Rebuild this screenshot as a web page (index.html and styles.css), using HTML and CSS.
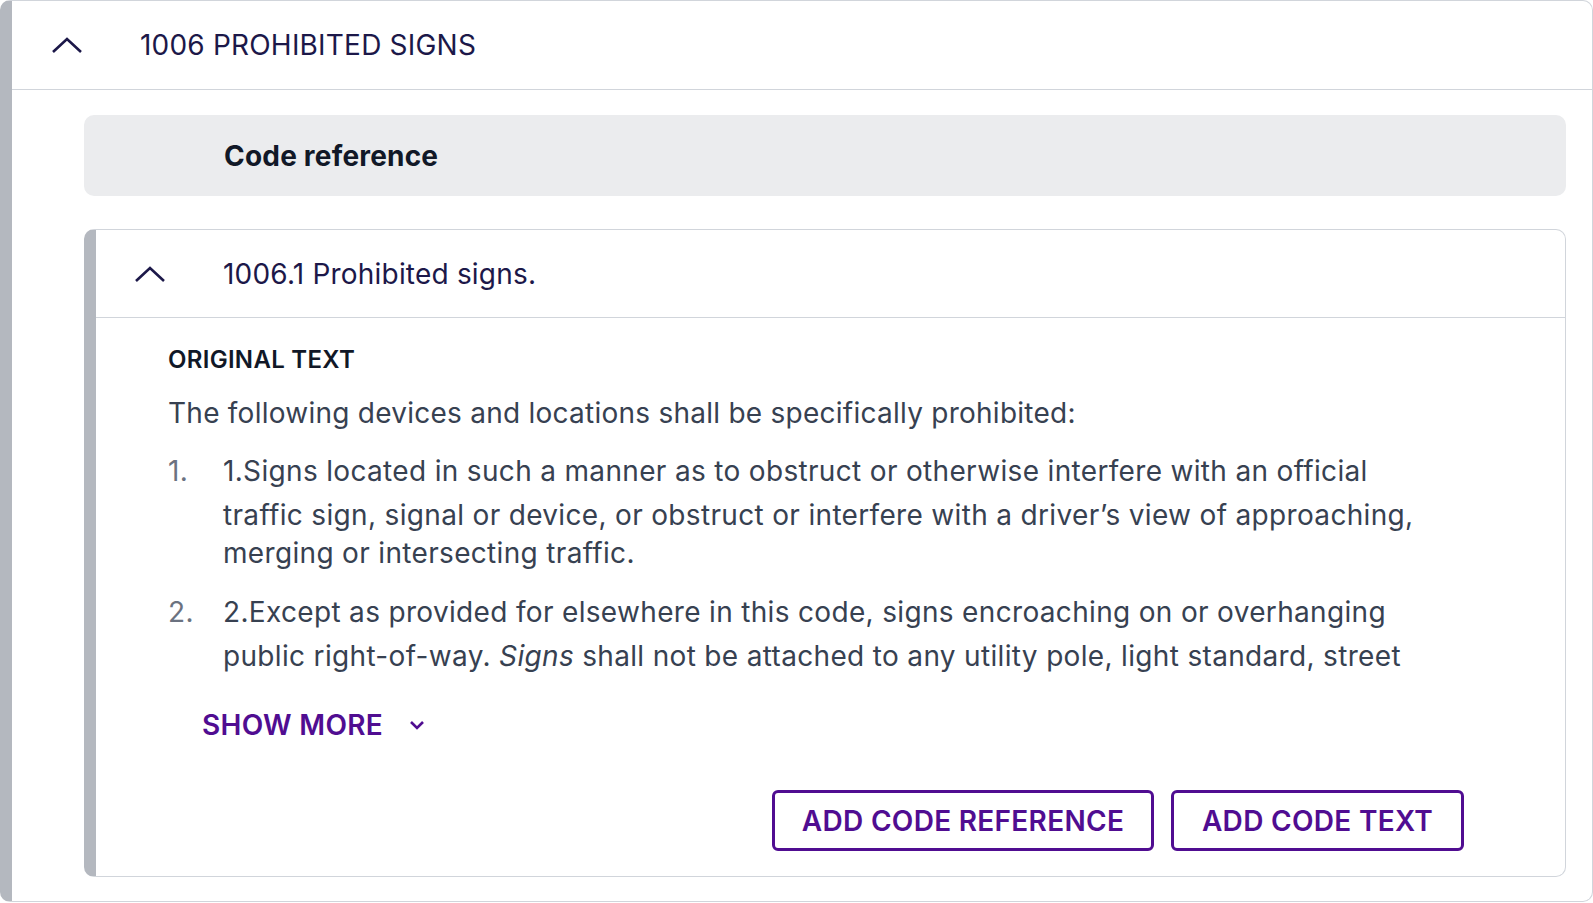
FILE: index.html
```html
<!DOCTYPE html>
<html lang="en">
<head>
<meta charset="utf-8">
<title>1006 Prohibited signs</title>
<link rel="stylesheet" href="styles.css">
</head>
<body>
<section class="card">
  <header class="card-head">
    <svg class="chev" width="32" height="18" viewBox="0 0 32 18" aria-hidden="true"><path d="M2 16 L16 3 L30 16" fill="none" stroke="#1c1849" stroke-width="2.6"/></svg>
    <h1 class="card-title">1006 PROHIBITED SIGNS</h1>
  </header>
  <div class="card-body">
    <div class="ref-bar">Code reference</div>
    <section class="sub">
      <header class="sub-head">
        <svg class="chev" width="32" height="18" viewBox="0 0 32 18" aria-hidden="true"><path d="M2 16 L16 3 L30 16" fill="none" stroke="#1c1849" stroke-width="2.6"/></svg>
        <h2 class="sub-title">1006.1 Prohibited signs.</h2>
      </header>
      <div class="sub-body">
        <h3 class="label">ORIGINAL TEXT</h3>
        <div class="text-clip">
          <p class="lead">The following devices and locations shall be specifically prohibited:</p>
          <ol class="items">
            <li class="item"><span class="num">1.</span><span class="item-text"><span class="strut"></span>1.Signs located in such a manner as to obstruct or otherwise interfere with an official traffic sign, signal or device, or obstruct or interfere with a driver’s view of approaching, merging or intersecting traffic.</span></li>
            <li class="item"><span class="num">2.</span><span class="item-text"><span class="strut"></span>2.Except as provided for elsewhere in this code, signs encroaching on or overhanging public right-of-way. <em>Signs</em> shall not be attached to any utility pole, light standard, street tree or any other public facility located within the public right-of-way.</span></li>
          </ol>
        </div>
        <button class="more" type="button">SHOW MORE <svg width="16" height="10" viewBox="0 0 16 10" aria-hidden="true"><path d="M2 2 L8 8 L14 2" fill="none" stroke="#500d91" stroke-width="2.6"/></svg></button>
        <div class="actions">
          <button class="btn btn-ref" type="button">ADD CODE REFERENCE</button>
          <button class="btn btn-text" type="button">ADD CODE TEXT</button>
        </div>
      </div>
    </section>
  </div>
</section>
</body>
</html>
```

FILE: styles.css
```css
* { box-sizing: border-box; }
html, body { margin: 0; padding: 0; background: #ffffff; }
body { font-family: Inter, "Noto Sans", sans-serif; }

.card {
  width: 1593px;
  height: 902px;
  border: 1px solid #d1d5db;
  border-left: 12px solid #b4b8bf;
  border-radius: 10px;
  overflow: hidden;
  background: #fff;
}

.card-head {
  height: 89px;
  display: flex;
  align-items: center;
  padding-left: 39px;
  border-bottom: 1px solid #d1d5db;
}
.chev { display: block; flex: none; }
.card-title {
  margin: 0 0 0 57px;
  font-size: 28px;
  font-weight: 400;
  color: #1c1849;
  letter-spacing: 0.2px;
}

.card-body {
  padding: 25px 26px 0 72px;
}
.ref-bar {
  height: 81px;
  background: #ebecee;
  border-radius: 10px;
  display: flex;
  align-items: center;
  padding-left: 140px;
  font-size: 28px;
  font-weight: 700;
  color: #111827;
  letter-spacing: 0.2px;
}

.sub {
  margin-top: 33px;
  height: 648px;
  border: 1px solid #d1d5db;
  border-left: 12px solid #b4b8bf;
  border-radius: 10px;
  overflow: hidden;
}
.sub-head {
  height: 88px;
  display: flex;
  align-items: center;
  padding-left: 38px;
  border-bottom: 1px solid #d1d5db;
}
.sub-title {
  margin: 0 0 0 57px;
  font-size: 28px;
  font-weight: 400;
  color: #1c1849;
  letter-spacing: 0.2px;
}

.sub-body {
  padding: 27px 101px 0 72px;
}
.label {
  margin: 0;
  font-size: 24px;
  line-height: 30px;
  font-weight: 600;
  color: #111827;
  letter-spacing: 0.3px;
}
.text-clip {
  height: 299px;
  overflow: hidden;
  padding-right: 24px;
  color: #374151;
  font-size: 28px;
  letter-spacing: 0.33px;
}
.lead {
  margin: 19px 0 0;
  line-height: 38px;
  letter-spacing: 0.25px;
}
.items {
  list-style: none;
  margin: 20px 0 0;
  padding: 0;
}
.item {
  display: flex;
  line-height: 38px;
  margin-bottom: 21px;
}
.num {
  flex: none;
  width: 55px;
  color: #6b7280;
}
.strut {
  display: inline-block;
  width: 0;
  height: 44px;
  vertical-align: top;
}
.item-text em { font-style: italic; }

.more {
  display: flex;
  align-items: center;
  gap: 26px;
  height: 34px;
  margin: 34px 0 0 34px;
  padding: 0;
  border: 0;
  background: none;
  font-family: inherit;
  font-size: 28px;
  font-weight: 600;
  color: #500d91;
  letter-spacing: 0.3px;
}

.actions {
  display: flex;
  justify-content: flex-end;
  gap: 17px;
  margin-top: 48px;
}
.btn {
  height: 61px;
  border: 3px solid #500d91;
  border-radius: 6px;
  background: #fff;
  font-family: inherit;
  font-size: 28px;
  font-weight: 600;
  color: #500d91;
  letter-spacing: 0.3px;
}
.btn-ref { width: 382px; }
.btn-text { width: 293px; }
```
